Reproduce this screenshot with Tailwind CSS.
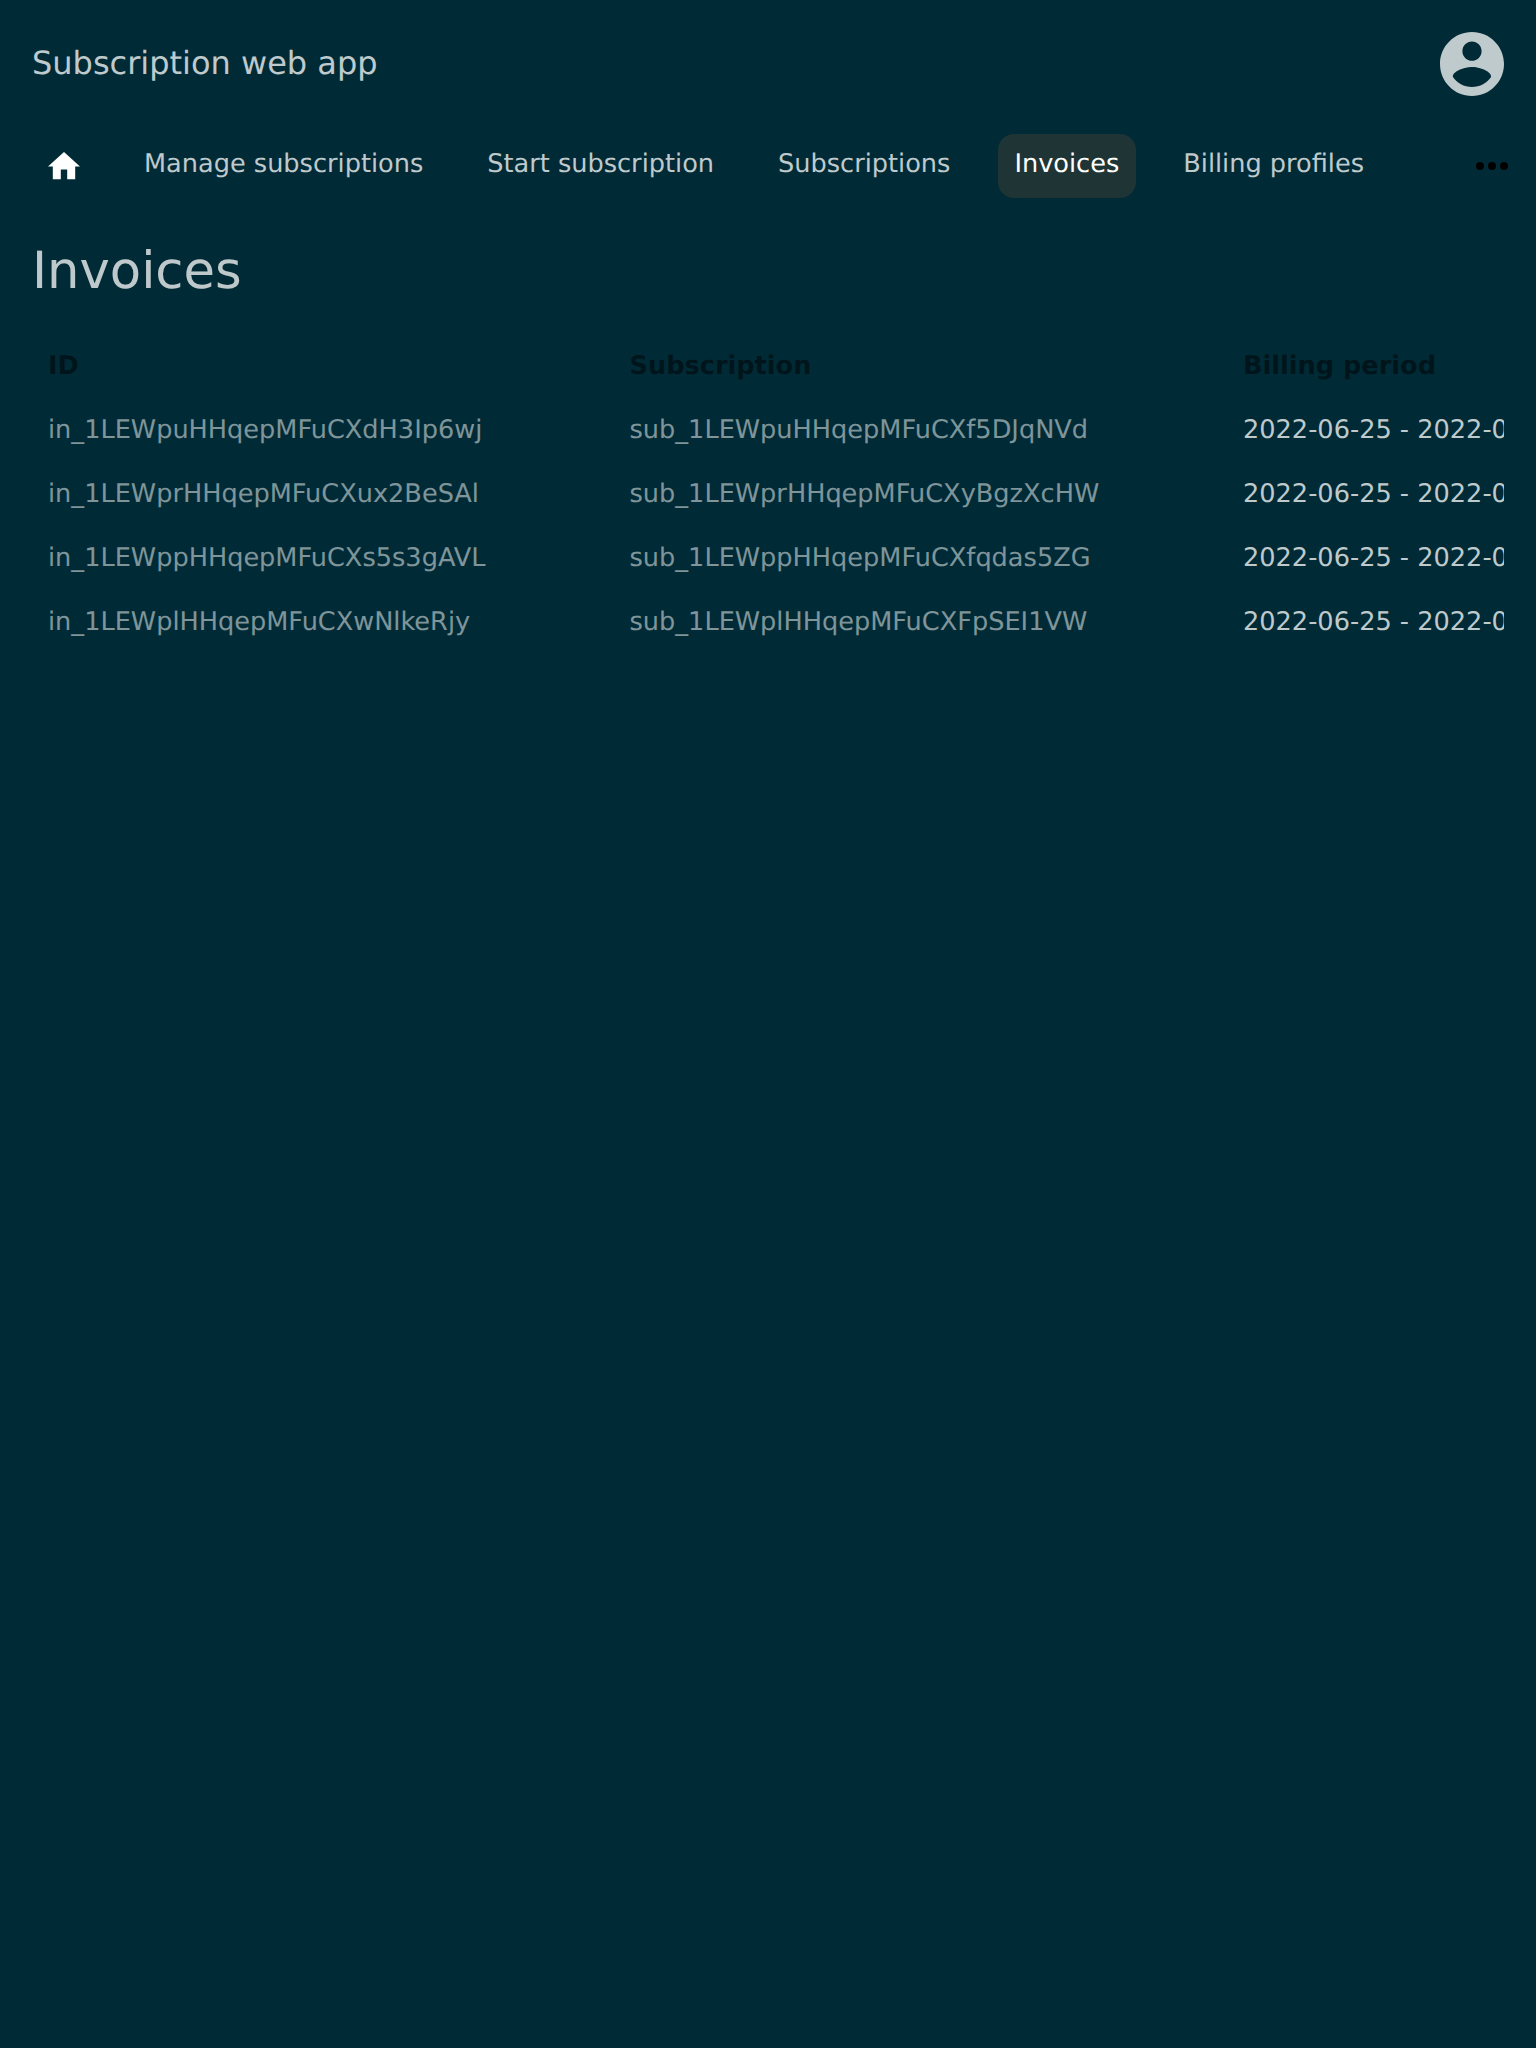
<!DOCTYPE html>
<html lang="en">
<head>
<meta charset="utf-8">
<title>Subscription web app</title>
<script src="https://cdn.jsdelivr.net/npm/@tailwindcss/browser@4"></script>
</head>
<body class="min-h-screen overflow-x-hidden bg-[#002b36] font-['DejaVu_Sans',sans-serif] text-[25.6px] text-white/75 [text-rendering:geometricPrecision]">
  <header class="flex h-32 items-center justify-between px-8">
    <a class="text-[32px] leading-[62px] pb-[2px]">Subscription web app</a>
    <svg class="size-16 fill-[#bfcacd]" viewBox="2 2 20 20"><path d="M12 2C6.48 2 2 6.48 2 12s4.48 10 10 10 10-4.48 10-10S17.52 2 12 2zm0 3c1.66 0 3 1.34 3 3s-1.34 3-3 3-3-1.34-3-3 1.34-3 3-3zm0 14.2c-2.5 0-4.71-1.28-6-3.22.03-1.99 4-3.08 6-3.08 1.99 0 5.97 1.09 6 3.08-1.29 1.94-3.5 3.22-6 3.22z"/></svg>
  </header>
  <nav class="mt-[6px] flex h-16 items-start gap-8 pl-8 pr-7 leading-[60px]">
    <a class="h-16 px-4 pt-[18.4px]"><svg class="h-[27.2px] w-8 fill-white" viewBox="2 3 20 17"><path d="M10 20v-6h4v6h5v-8h3L12 3 2 12h3v8z"/></svg></a>
    <a class="h-16 whitespace-nowrap px-4">Manage subscriptions</a>
    <a class="h-16 whitespace-nowrap px-4">Start subscription</a>
    <a class="h-16 whitespace-nowrap px-4">Subscriptions</a>
    <a class="-mr-px h-16 whitespace-nowrap rounded-2xl bg-[#1f3535] pl-4 pr-[17px] text-white">Invoices</a>
    <a class="h-16 whitespace-nowrap px-4">Billing profiles</a>
    <svg class="ml-auto mt-7 h-2 w-8 shrink-0 fill-black" viewBox="0 0 32 8"><circle cx="4" cy="4" r="4"/><circle cx="16" cy="4" r="4"/><circle cx="28" cy="4" r="4"/></svg>
  </nav>
  <main class="px-8 pt-8">
    <h1 class="text-[51.2px] leading-[82px]">Invoices</h1>
    <div class="mt-[22px] overflow-hidden">
      <table class="w-[1700px] table-fixed text-left leading-[64px] whitespace-nowrap">
        <colgroup><col class="w-[581px]"><col class="w-[614px]"><col></colgroup>
        <thead class="text-black/50">
          <tr><th class="px-4 font-bold">ID</th><th class="pl-[16.5px] font-bold">Subscription</th><th class="px-4 font-bold">Billing period</th></tr>
        </thead>
        <tbody>
          <tr><td class="px-4 text-white/50">in_1LEWpuHHqepMFuCXdH3Ip6wj</td><td class="pl-[16.5px] text-white/50">sub_1LEWpuHHqepMFuCXf5DJqNVd</td><td class="px-4">2022-06-25 - 2022-07-25</td></tr>
          <tr><td class="px-4 text-white/50">in_1LEWprHHqepMFuCXux2BeSAl</td><td class="pl-[16.5px] text-white/50">sub_1LEWprHHqepMFuCXyBgzXcHW</td><td class="px-4">2022-06-25 - 2022-07-25</td></tr>
          <tr><td class="px-4 text-white/50">in_1LEWppHHqepMFuCXs5s3gAVL</td><td class="pl-[16.5px] text-white/50">sub_1LEWppHHqepMFuCXfqdas5ZG</td><td class="px-4">2022-06-25 - 2022-07-25</td></tr>
          <tr><td class="px-4 text-white/50">in_1LEWplHHqepMFuCXwNlkeRjy</td><td class="pl-[16.5px] text-white/50">sub_1LEWplHHqepMFuCXFpSEI1VW</td><td class="px-4">2022-06-25 - 2022-07-25</td></tr>
        </tbody>
      </table>
    </div>
  </main>
</body>
</html>
